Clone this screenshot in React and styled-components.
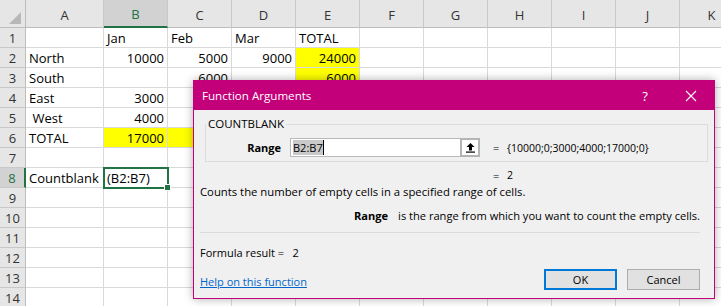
import React from "react";
import styled, { createGlobalStyle, css } from "styled-components";

const GlobalStyle = createGlobalStyle`
  html, body {
    margin: 0;
    padding: 0;
    background: #ffffff;
    overflow: hidden;
  }
`;

const Page = styled.div`
  position: relative;
  width: 721px;
  height: 306px;
  overflow: hidden;
  font-family: "Open Sans", "Liberation Sans", sans-serif;
`;

const Grid = styled.div`
  display: grid;
  grid-template-columns: 26px 78px repeat(10, 64px);
  grid-template-rows: 28px repeat(14, 20px);
`;

const Corner = styled.div`
  position: relative;
  background: #e6e6e6;
  border-right: 1px solid #bdbdbd;
  border-bottom: 1px solid #bdbdbd;
  box-sizing: border-box;
  &::after {
    content: "";
    position: absolute;
    right: 4px;
    bottom: 3px;
    border-left: 12px solid transparent;
    border-bottom: 12px solid #b8b8b8;
  }
`;

const ColHead = styled.div`
  display: flex;
  align-items: center;
  justify-content: center;
  padding-top: 2px;
  box-sizing: border-box;
  background: ${(p) => (p.$active ? "#d2d2d2" : "#e6e6e6")};
  border-right: 1px solid #c8c8c8;
  border-bottom: ${(p) => (p.$active ? "2px solid #217346" : "1px solid #bdbdbd")};
  font-size: 13px;
  color: ${(p) => (p.$active ? "#217346" : "#333")};
`;

const RowHead = styled.div`
  display: flex;
  align-items: center;
  justify-content: center;
  box-sizing: border-box;
  background: ${(p) => (p.$active ? "#d2d2d2" : "#e6e6e6")};
  border-bottom: 1px solid #c8c8c8;
  border-right: ${(p) => (p.$active ? "2px solid #217346" : "1px solid #bdbdbd")};
  font-size: 13px;
  color: ${(p) => (p.$active ? "#217346" : "#333")};
`;

const Cell = styled.div`
  position: relative;
  display: flex;
  align-items: center;
  justify-content: ${(p) => (p.$num ? "flex-end" : "flex-start")};
  padding: 0 3px;
  box-sizing: border-box;
  border-right: 1px solid #d9d9d9;
  border-bottom: 1px solid #d9d9d9;
  background: ${(p) => (p.$fill ? "#ffff00" : "#ffffff")};
  font-size: 13px;
  color: #000;
  white-space: pre;
  ${(p) =>
    p.$selected &&
    css`
      outline: 2px solid #217346;
      outline-offset: -1px;
      z-index: 1;
    `}
`;

const FillHandle = styled.span`
  position: absolute;
  right: -4px;
  bottom: -4px;
  width: 5px;
  height: 5px;
  background: #217346;
  border: 1px solid #fff;
`;

const Dialog = styled.div`
  position: absolute;
  left: 193px;
  top: 80px;
  width: 522px;
  height: 219px;
  box-sizing: border-box;
  border: 1px solid #c3007a;
  background: #f0f0f0;
  box-shadow: 0 0 9px rgba(0, 0, 0, 0.32);
  display: flex;
  flex-direction: column;
  font-family: "Open Sans", "Liberation Sans", sans-serif;
  font-size: 11px;
  color: #000;
  z-index: 5;
`;

const TitleBar = styled.div`
  height: 29px;
  flex: none;
  background: #c3007a;
  color: #fff;
  display: flex;
  align-items: center;
  padding-left: 8px;
  font-size: 11.6px;
`;

const Title = styled.span`
  flex: 1;
`;

const TitleButton = styled.span`
  width: 46px;
  height: 29px;
  display: flex;
  align-items: center;
  justify-content: center;
  font-size: 13px;
`;

const Body = styled.div`
  display: flex;
  flex-direction: column;
  padding: 0 14px 0 6px;
`;

const Group = styled.div`
  position: relative;
  margin: 14px -8px 0 5px;
  height: 38px;
  box-sizing: border-box;
  border: 1px solid #dcdcdc;
  padding-top: 13px;
`;

const Legend = styled.span`
  position: absolute;
  left: 0;
  top: -9px;
  padding: 0 2px;
  background: #f0f0f0;
  font-size: 11.5px;
`;

const ArgRow = styled.div`
  display: flex;
  align-items: center;
  height: 19px;
`;

const ArgLabel = styled.span`
  width: 75px;
  text-align: right;
  font-weight: 700;
  margin-right: 9px;
`;

const RangeInput = styled.div`
  width: 190px;
  height: 19px;
  box-sizing: border-box;
  border: 1px solid #b9b9b9;
  background: #fff;
  display: flex;
  align-items: center;
  padding-left: 2px;
`;

const Selected = styled.span`
  background: #c9c9c9;
  border-right: 1px solid #000;
`;

const Collapse = styled.span`
  margin-left: auto;
  width: 20px;
  height: 19px;
  margin-top: -1px;
  margin-right: -1px;
  box-sizing: border-box;
  border: 2px solid #b4b4b4;
  background: #fff;
  display: flex;
  align-items: center;
  justify-content: center;
`;

const Equals = styled.span`
  margin-left: ${(p) => (p.$flush ? 0 : 13)}px;
  width: 14px;
`;

const Value = styled.span`
  font-size: 10.5px;
`;

const EqRow = styled.div`
  display: flex;
  align-items: center;
  height: 18px;
  margin-top: 4px;
  padding-left: 293px;
`;

const Line = styled.div`
  height: ${(p) => p.$h}px;
  margin-top: ${(p) => p.$mt}px;
  display: flex;
  align-items: center;
  justify-content: ${(p) => (p.$right ? "flex-end" : "flex-start")};
  white-space: pre;
  font-size: ${(p) => p.$size || 11}px;
`;

const Bold = styled.span`
  font-weight: 700;
  margin-right: 10px;
`;

const Separator = styled.div`
  height: 1px;
  margin-top: 9px;
  background: #dcdcdc;
`;

const Footer = styled.div`
  display: flex;
  align-items: center;
  height: 21px;
  margin-top: 9px;
`;

const HelpLink = styled.a`
  color: #0066cc;
  text-decoration: underline;
  margin-top: 3px;
  flex: 1;
`;

const Button = styled.button`
  width: 73px;
  height: 21px;
  margin-left: 10px;
  box-sizing: border-box;
  background: #e1e1e1;
  border: ${(p) => (p.$primary ? "2px solid #0078d7" : "1px solid #adadad")};
  font-family: inherit;
  font-size: 11px;
  color: #000;
  padding: 0;
`;

const cols = ["A", "B", "C", "D", "E", "F", "G", "H", "I", "J", "K"];

const data = {
  1: { B: "Jan", C: "Feb", D: "Mar", E: "TOTAL" },
  2: { A: "North", B: 10000, C: 5000, D: 9000, E: 24000 },
  3: { A: "South", C: 6000, E: 6000 },
  4: { A: "East", B: 3000 },
  5: { A: " West", B: 4000 },
  6: { A: "TOTAL", B: 17000 },
  8: { A: "Countblank", B: "(B2:B7)" },
};

const yellow = { E2: 1, E3: 1, E4: 1, E5: 1, E6: 1, B6: 1, C6: 1 };

function Sheet() {
  const cells = [<Corner key="corner" />];
  cols.forEach((c) =>
    cells.push(
      <ColHead key={c} $active={c === "B"}>
        {c}
      </ColHead>
    )
  );
  for (let r = 1; r <= 14; r++) {
    cells.push(
      <RowHead key={"r" + r} $active={r === 8}>
        {r}
      </RowHead>
    );
    cols.forEach((c) => {
      const v = data[r] && data[r][c];
      const sel = r === 8 && c === "B";
      cells.push(
        <Cell
          key={c + r}
          $num={typeof v === "number"}
          $fill={yellow[c + r]}
          $selected={sel}
        >
          {v}
          {sel && <FillHandle />}
        </Cell>
      );
    });
  }
  return <Grid>{cells}</Grid>;
}

function FunctionArguments() {
  return (
    <Dialog>
      <TitleBar>
        <Title>Function Arguments</Title>
        <TitleButton>?</TitleButton>
        <TitleButton>
          <svg width="12" height="12" viewBox="0 0 12 12">
            <path d="M1 1L11 11M11 1L1 11" stroke="#fff" strokeWidth="1.1" />
          </svg>
        </TitleButton>
      </TitleBar>
      <Body>
        <Group>
          <Legend>COUNTBLANK</Legend>
          <ArgRow>
            <ArgLabel>Range</ArgLabel>
            <RangeInput>
              <Selected>B2:B7</Selected>
              <Collapse>
                <svg width="11" height="11" viewBox="0 0 11 11">
                  <path d="M5.5 1L1.5 5H4V8.5H7V5H9.5Z" fill="#000" />
                  <rect x="1" y="9.5" width="9" height="1.2" fill="#000" />
                </svg>
              </Collapse>
            </RangeInput>
            <Equals>=</Equals>
            <Value>{"{10000;0;3000;4000;17000;0}"}</Value>
          </ArgRow>
        </Group>
        <EqRow>
          <Equals $flush>=</Equals>
          <Value>2</Value>
        </EqRow>
        <Line $h={14} $mt={0} $size={11.3}>
          Counts the number of empty cells in a specified range of cells.
        </Line>
        <Line $h={16} $mt={9} $right $size={11.1}>
          <Bold>Range</Bold>is the range from which you want to count the empty cells.
        </Line>
        <Separator />
        <Line $h={16} $mt={11}>
          {"Formula result =   2"}
        </Line>
        <Footer>
          <HelpLink href="#">Help on this function</HelpLink>
          <Button $primary>OK</Button>
          <Button>Cancel</Button>
        </Footer>
      </Body>
    </Dialog>
  );
}

export default function App() {
  return (
    <>
      <GlobalStyle />
      <Page>
        <Sheet />
        <FunctionArguments />
      </Page>
    </>
  );
}
